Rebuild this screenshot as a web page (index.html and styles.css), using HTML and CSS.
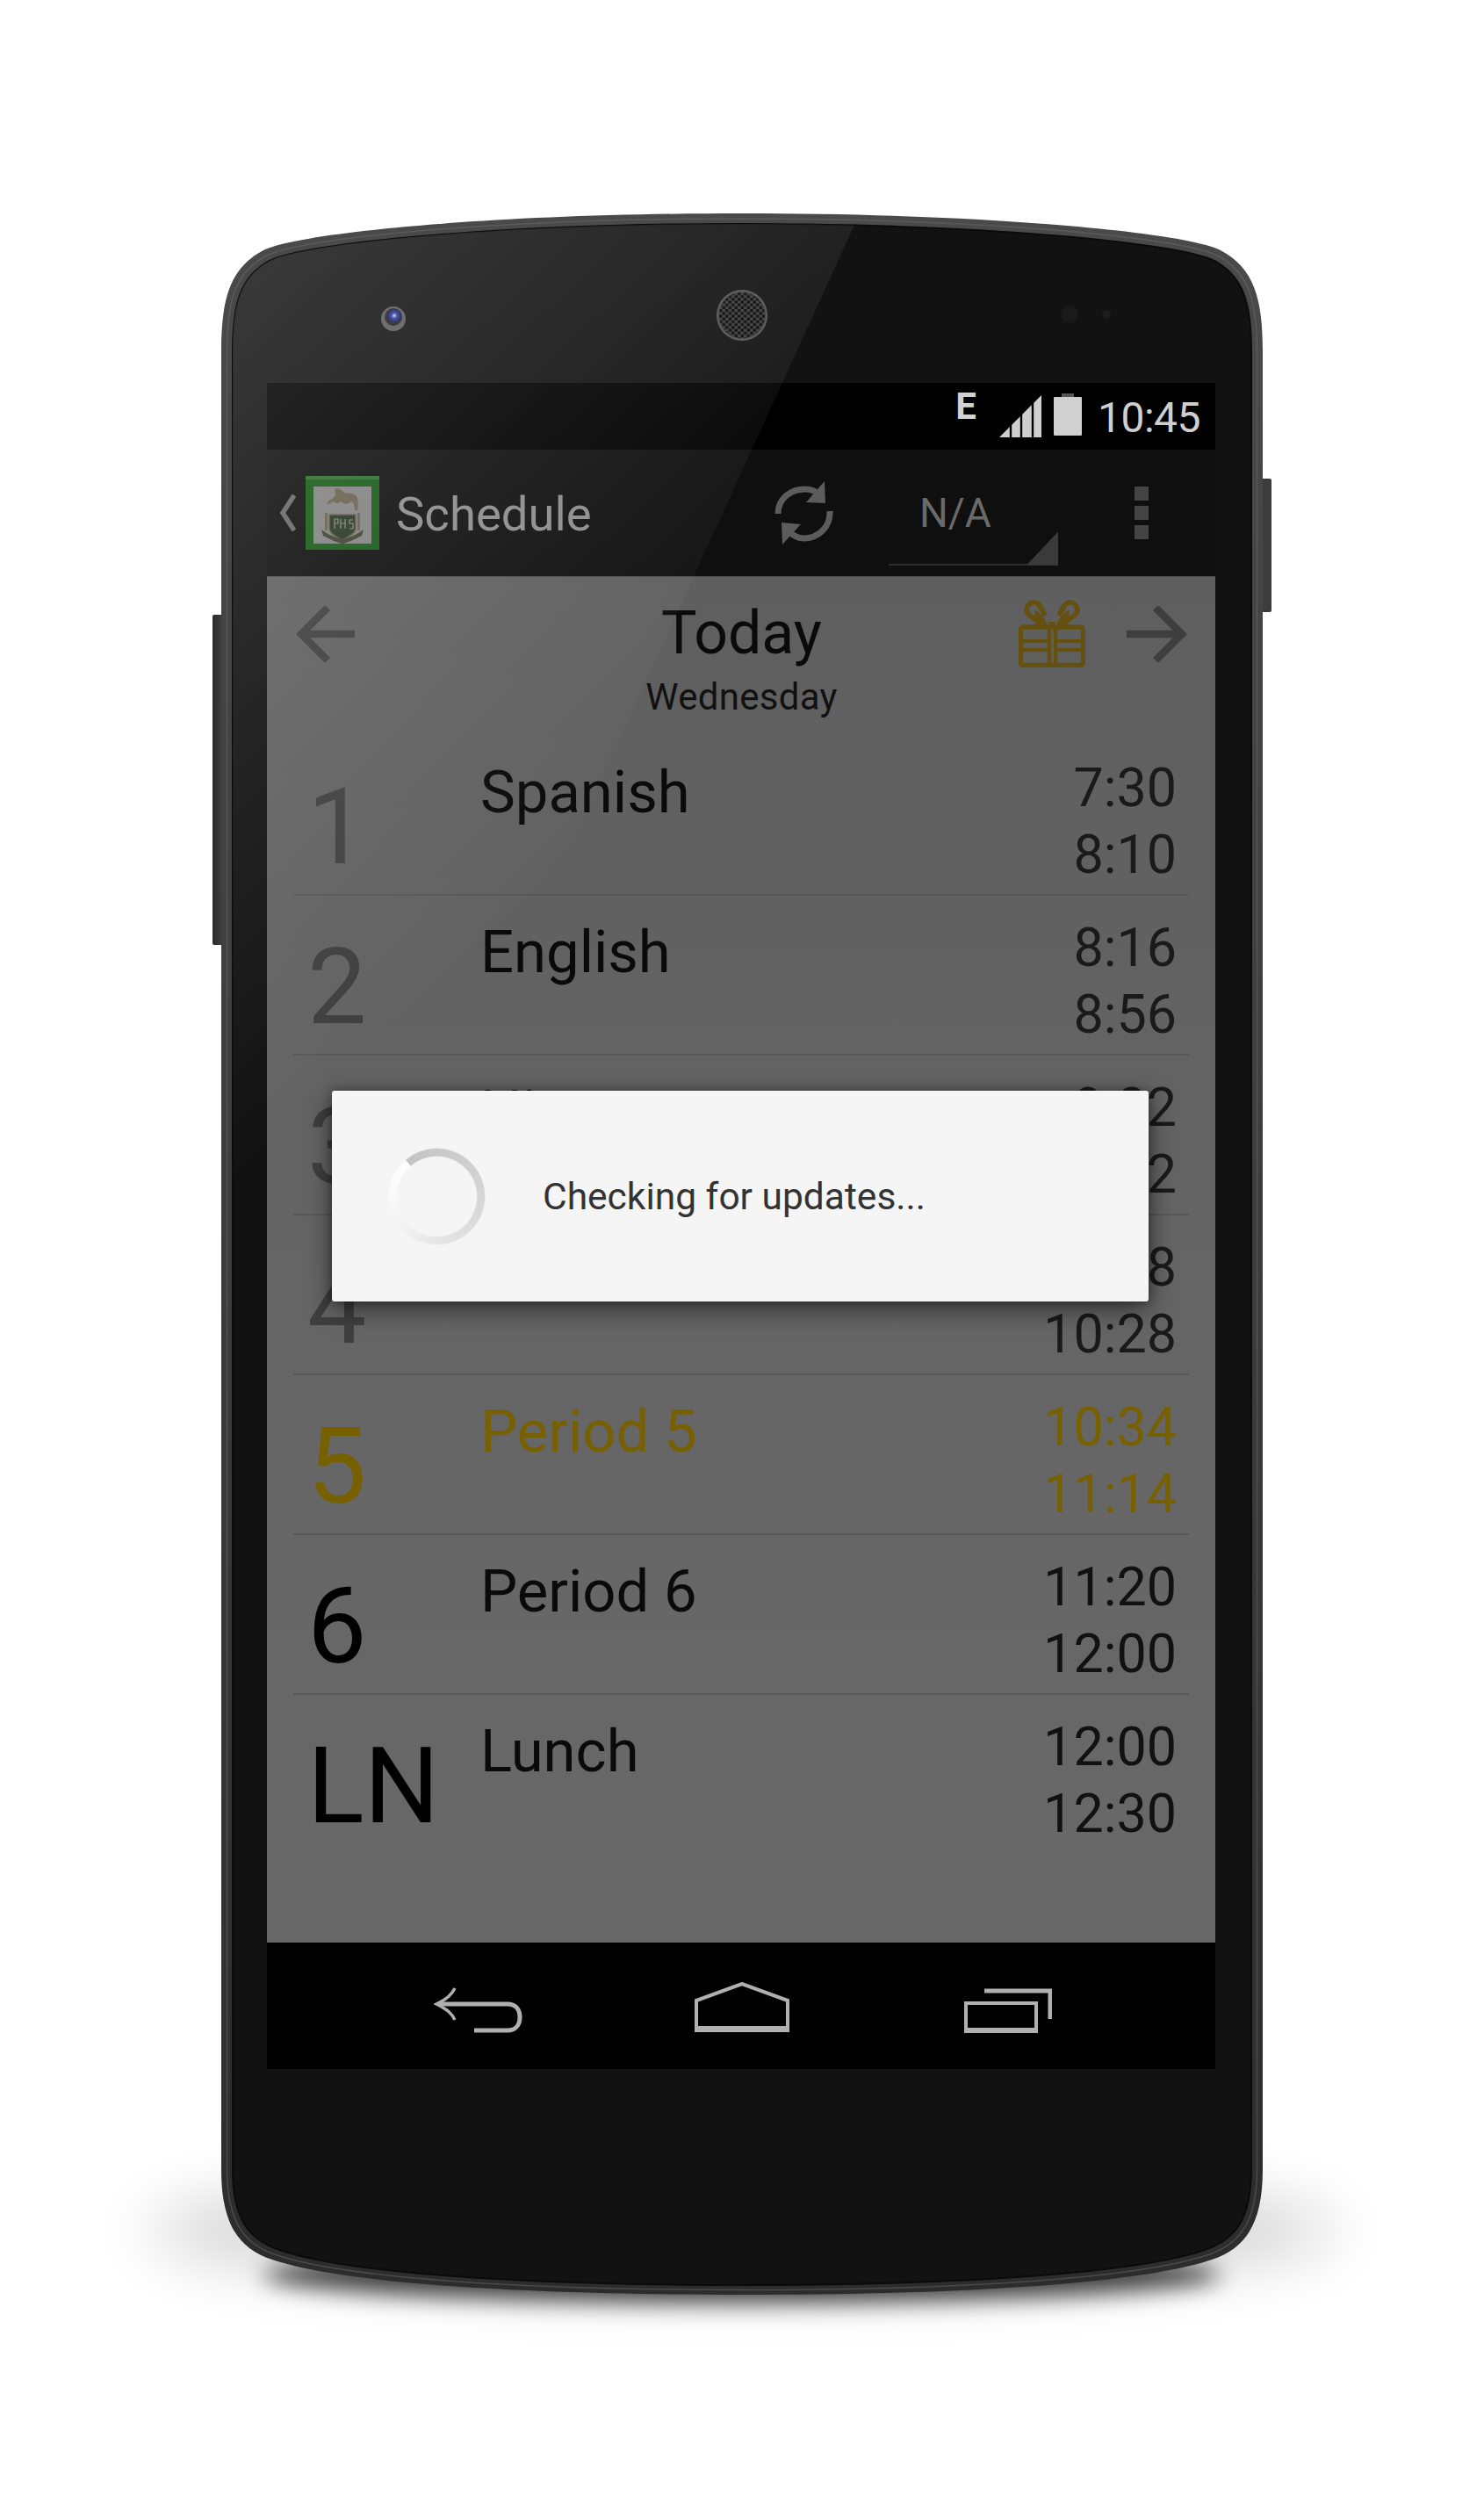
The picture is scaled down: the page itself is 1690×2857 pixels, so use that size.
FILE: index.html
```html
<!DOCTYPE html>
<html lang="en">
<head>
<meta charset="utf-8">
<title>Schedule</title>
<link rel="stylesheet" href="styles.css">
</head>
<body>
<div class="stage">
  <svg class="device" viewBox="0 0 1690 2857" width="1690" height="2857" aria-hidden="true">
    <defs>
      <filter id="blurWide" x="-30%" y="-200%" width="160%" height="500%"><feGaussianBlur stdDeviation="34"/></filter>
      <filter id="blurNear" x="-30%" y="-200%" width="160%" height="500%"><feGaussianBlur stdDeviation="13"/></filter>
      <linearGradient id="rim" x1="0" y1="0" x2="0" y2="1">
        <stop offset="0" stop-color="#4a4a4a"/><stop offset=".5" stop-color="#3c3c3c"/><stop offset="1" stop-color="#2c2c2c"/>
      </linearGradient>
      <linearGradient id="btn" x1="0" y1="0" x2="1" y2="0">
        <stop offset="0" stop-color="#2a2a2a"/><stop offset="1" stop-color="#464646"/>
      </linearGradient>
      <pattern id="holes" width="7" height="6.4" patternUnits="userSpaceOnUse">
        <circle cx="1.8" cy="1.6" r="1.9" fill="#050505"/><circle cx="5.3" cy="4.8" r="1.9" fill="#050505"/>
      </pattern>
      <radialGradient id="lens" cx=".55" cy=".42"><stop offset="0" stop-color="#d4dcf4"/><stop offset=".3" stop-color="#2f3fa8"/><stop offset=".75" stop-color="#161a44"/><stop offset="1" stop-color="#222"/></radialGradient>
    </defs>
    <ellipse cx="845" cy="2540" rx="680" ry="70" fill="#000" opacity=".16" filter="url(#blurWide)"/>
    <ellipse cx="845" cy="2590" rx="545" ry="32" fill="#000" opacity=".72" filter="url(#blurNear)"/>
    <rect class="side" x="242" y="700" width="14" height="376" rx="2" fill="url(#btn)"/>
    <rect class="side" x="1434" y="545" width="14" height="152" rx="2" fill="#3c3c3c"/>
    <path d="M252 400C252 340 262 305 300 285C340 265 560 243 845 243C1130 243 1350 265 1390 285C1428 305 1438 340 1438 400L1438 2470C1438 2530 1420 2560 1380 2573C1300 2600 1100 2613 845 2613C590 2613 390 2600 310 2573C270 2560 252 2530 252 2470Z" fill="url(#rim)"/>
    <path d="M258.500 400C258.500 342 268 310 303.500 291C343 271 562 249 845 249C1128 249 1347 271 1386.500 291C1422 310 1431.500 342 1431.500 400L1431.500 2470C1431.500 2527 1414 2555 1376 2567.500C1297 2594 1100 2607.500 845 2607.500C590 2607.500 393 2594 314 2567.500C276 2555 258.500 2527 258.500 2470Z" fill="none" stroke="#6e6e6e" stroke-width="1.500" opacity=".45"/>
    <path d="M265 400C265 345 274 315 307 297C346 277 565 255 845 255C1125 255 1344 277 1383 297C1416 315 1425 345 1425 400L1425 2470C1425 2525 1408 2550 1372 2562C1295 2588 1100 2602 845 2602C590 2602 395 2588 318 2562C282 2550 265 2525 265 2470Z" fill="#121212" stroke="#0b0b0b" stroke-width="2"/>
    <circle cx="448" cy="363" r="14" fill="#5a5a5a"/>
    <circle cx="448" cy="361" r="10" fill="url(#lens)"/>
    <circle cx="845" cy="359" r="29" fill="#555"/>
    <circle cx="845" cy="359" r="27" fill="#3a3a3a"/>
    <circle cx="845" cy="359" r="26" fill="url(#holes)"/>
    <circle cx="1218" cy="358" r="10" fill="#1a1a1a"/>
    <circle cx="1260" cy="358" r="5" fill="#1c1c1c"/>
  </svg>

  <main class="screen">
    <header class="status">
      <span class="net">E</span>
      <svg class="signal" viewBox="0 0 48 48" width="48" height="48" aria-hidden="true">
        <polygon points="0,48 48,0 48,48" fill="#cfcfcf"/>
        <path d="M13 0V48M25 0V48M38 0V48" stroke="#000" stroke-width="2.400"/>
      </svg>
      <svg class="battery" viewBox="0 0 32 48" width="32" height="48" aria-hidden="true">
        <rect x="9" y="0" width="14" height="5" fill="#555"/>
        <rect x="0" y="4" width="32" height="44" rx="1" fill="#d0d0d0"/>
      </svg>
      <span class="clock">10:45</span>
    </header>

    <nav class="actionbar">
      <svg class="chevron" viewBox="0 0 20 42" width="20" height="42" aria-hidden="true">
        <path d="M18 1 5 21 18 41" fill="none" stroke="#666" stroke-width="5.500"/>
      </svg>
      <svg class="logo" viewBox="0 0 84 84" width="84" height="84" aria-hidden="true">
        <rect width="84" height="84" fill="#175a17"/>
        <rect width="84" height="4" fill="#2f6d2f"/>
        <rect x="9" y="12" width="66" height="65" fill="#828282"/>
        <path d="M24 31C28 26 32 26 34 22L33 15C37 13 40 15 43 18C47 22 52 17 58 23C60 27 60 33 59 39L56 39C56 34 55 30 52 29C48 33 45 32 39 29C37 33 34 30 31 29C28 31 26 33 24 31Z" fill="#67604c"/>
        <rect x="22" y="42" width="3" height="20" fill="#67604c"/>
        <rect x="59" y="42" width="3" height="20" fill="#67604c"/>
        <path d="M27 44H57V60C57 66 48 70 42 73C36 70 27 66 27 60Z" fill="#263726" stroke="#67604c" stroke-width="1.500"/>
        <path d="M18 61C24 66 34 70 42 72C50 70 60 66 66 61L64 68C56 72 48 76 42 77C36 76 28 72 20 68Z" fill="#3f4230"/>
        <path d="M33 49V60M33 49H37V54H33M40 49V60M45 49V60M40 54H45M54 50H50V54H54V60H50" fill="none" stroke="#8a8a70" stroke-width="1.200"/>
      </svg>
      <span class="app-title">Schedule</span>
      <svg class="refresh" viewBox="0 0 67 72" width="67" height="72" aria-hidden="true">
        <path d="M4 37C4 20 18 9 35 9C42 9 48 12 52 16" fill="none" stroke="#5c5c5c" stroke-width="7"/>
        <path d="M57 0 58 25 36 24Z" fill="#5c5c5c"/>
        <path d="M63 34C64 52 50 65 33 65C26 65 20 61 15 56" fill="none" stroke="#5c5c5c" stroke-width="7"/>
        <path d="M9 72 8 47 30 49Z" fill="#5c5c5c"/>
      </svg>
      <div class="spinner-field">
        <span class="spinner-value">N/A</span>
      </div>
      <svg class="overflow" viewBox="0 0 16 60" width="16" height="60" aria-hidden="true">
        <rect width="16" height="16" fill="#444"/><rect y="22" width="16" height="16" fill="#444"/><rect y="44" width="16" height="16" fill="#444"/>
      </svg>
    </nav>

    <section class="content">
      <div class="day-head">
        <svg class="arrow arrow-left" viewBox="0 0 67 64" width="67" height="64" aria-hidden="true">
          <path d="M67 32H6M36 2 6 32 36 62" fill="none" stroke="#3e3e3e" stroke-width="8.500"/>
        </svg>
        <div class="day-title">
          <div class="day-name">Today</div>
          <div class="day-sub">Wednesday</div>
        </div>
        <div class="day-actions">
          <svg class="gift" viewBox="0 0 76 77" width="76" height="77" aria-hidden="true">
            <g fill="none" stroke="#65500f">
              <rect x="2.500" y="31" width="71" height="43.500" rx="3" stroke-width="5.500"/>
              <path d="M2 47H33M43 47H74M2 57H33M43 57H74M35 30V75M42 30V75" stroke-width="4.500"/>
              <path d="M30 27C20 24 10 18 9 12C9 6 14 2 19 3C24 4 26 10 30 18" stroke-width="5.500"/>
              <path d="M46 27C56 24 66 18 67 12C67 6 62 2 57 3C52 4 50 10 46 18" stroke-width="5.500"/>
            </g>
            <path d="M18 12C24 13 31 22 33 30H20ZM58 12C52 13 45 22 43 30H56ZM33 25H43L38 31Z" fill="#65500f"/>
          </svg>
          <svg class="arrow arrow-right" viewBox="0 0 69 64" width="69" height="64" aria-hidden="true">
            <path d="M0 32H63M33 2 63 32 33 62" fill="none" stroke="#3e3e3e" stroke-width="8.500"/>
          </svg>
        </div>
      </div>

      <ul class="periods">
        <li class="period past"><span class="num">1</span><span class="subject">Spanish</span><span class="times">7:30<br>8:10</span></li>
        <li class="period past"><span class="num">2</span><span class="subject">English</span><span class="times">8:16<br>8:56</span></li>
        <li class="period past"><span class="num">3</span><span class="subject">History</span><span class="times">9:02<br>9:42</span></li>
        <li class="period past"><span class="num">4</span><span class="subject">Science</span><span class="times">9:48<br>10:28</span></li>
        <li class="period current"><span class="num">5</span><span class="subject">Period 5</span><span class="times">10:34<br>11:14</span></li>
        <li class="period"><span class="num">6</span><span class="subject">Period 6</span><span class="times">11:20<br>12:00</span></li>
        <li class="period"><span class="num">LN</span><span class="subject">Lunch</span><span class="times">12:00<br>12:30</span></li>
      </ul>
    </section>

    <footer class="navbar">
      <svg class="nav-back" viewBox="0 0 104 56" width="104" height="56" aria-hidden="true">
        <path d="M24 2C20 10 15 14 3 20C15 26 20 30 24 38" fill="none" stroke="#b0b0b0" stroke-width="3.500"/>
        <path d="M6 20H84C93 20 98 26 98 35C98 44 93 50 84 50H46" fill="none" stroke="#b0b0b0" stroke-width="5"/>
      </svg>
      <svg class="nav-home" viewBox="0 0 108 58" width="108" height="58" aria-hidden="true">
        <path d="M2 55V21L54 2 106 21V55Z" fill="none" stroke="#b0b0b0" stroke-width="4"/>
        <path d="M0 53H108" stroke="#b0b0b0" stroke-width="6"/>
      </svg>
      <svg class="nav-recent" viewBox="0 0 100 54" width="100" height="54" aria-hidden="true">
        <path d="M2 19H82V51H2Z" fill="none" stroke="#b0b0b0" stroke-width="4"/>
        <path d="M0 50H84" stroke="#b0b0b0" stroke-width="6"/>
        <path d="M23 5H98V37" fill="none" stroke="#b0b0b0" stroke-width="5"/>
      </svg>
    </footer>

    <div class="dialog" role="dialog">
      <div class="progress"></div>
      <span class="dialog-text">Checking for updates...</span>
    </div>
  </main>

  <svg class="glare" viewBox="0 0 1690 2857" width="1690" height="2857" aria-hidden="true">
    <defs>
      <linearGradient id="sheen" gradientUnits="userSpaceOnUse" x1="280" y1="260" x2="877" y2="901">
        <stop offset="0" stop-color="#fff" stop-opacity=".17"/>
        <stop offset=".55" stop-color="#fff" stop-opacity=".065"/>
        <stop offset=".9" stop-color="#fff" stop-opacity="0"/>
      </linearGradient>
      <clipPath id="glass">
        <path d="M265 400C265 345 274 315 307 297C346 277 565 255 845 255C1125 255 1344 277 1383 297C1416 315 1425 345 1425 400L1425 2470L265 2470Z"/>
      </clipPath>
    </defs>
    <polygon points="252,243 979,243 400,1510 252,1510" fill="url(#sheen)" clip-path="url(#glass)"/>
  </svg>
</div>
</body>
</html>
```
FILE: styles.css
```css
* { box-sizing: border-box; }

html, body {
  margin: 0;
  padding: 0;
  background: #fff;
}

body {
  font-family: Roboto, "Liberation Sans", sans-serif;
}

.stage {
  position: relative;
  width: 1690px;
  height: 2857px;
  padding: 436px 0 0 304px;
  overflow: hidden;
}

.device,
.glare {
  position: absolute;
  left: 0;
  top: 0;
}

.glare {
  z-index: 2;
  pointer-events: none;
}

.screen {
  position: relative;
  width: 1080px;
  display: flex;
  flex-direction: column;
}

/* status bar */
.status {
  height: 76px;
  background: #000;
  display: flex;
  align-items: flex-start;
  padding-right: 17px;
  justify-content: flex-end;
}

.net {
  font-size: 42px;
  font-weight: 700;
  line-height: 42px;
  color: #d2d2d2;
  margin: 6px 26px 0 0;
}

.signal {
  margin: 14px 14px 0 0;
}

.battery {
  margin: 12px 18px 0 0;
}

.clock {
  font-size: 48px;
  line-height: 56px;
  letter-spacing: -0.5px;
  color: #cfcfcf;
  margin-top: 12px;
}

/* action bar */
.actionbar {
  height: 144px;
  background: #0f0f0f;
  display: flex;
  align-items: center;
  padding-left: 13px;
}

.chevron {
  margin-right: 11px;
}

.logo {
  margin-right: 19px;
}

.app-title {
  flex: 1;
  font-size: 54.500px;
  line-height: 64px;
  color: #8c8c8c;
  margin-top: 2px;
}

.refresh {
  margin-right: 63px;
  margin-left: 1px;
}

.spinner-field {
  position: relative;
  width: 193px;
  height: 90px;
  margin-top: 29px;
  margin-right: 87px;
  border-bottom: 2px solid #2c2c2c;
  padding-left: 35px;
}

.spinner-field::after {
  content: "";
  position: absolute;
  right: 0;
  bottom: -2px;
  width: 36px;
  height: 38px;
  background: #3a3a3a;
  clip-path: polygon(100% 0, 100% 100%, 0 100%);
}

.spinner-value {
  display: block;
  font-size: 46px;
  line-height: 54px;
  color: #6a6a6a;
  margin-top: 3px;
}

.overflow {
  margin-right: 76px;
}

/* content */
.content {
  height: 1556px;
  background: linear-gradient(#5f5f5f, #626262 30%, #666 65%, #686868);
  border-top: 1px solid #4c4c4c;
  display: flex;
  flex-direction: column;
}

.day-head {
  height: 181px;
  display: grid;
  grid-template-columns: 1fr auto 1fr;
  align-items: start;
  padding: 0 32px 0 33px;
}

.arrow-left {
  margin-top: 33px;
}

.day-title {
  text-align: center;
  padding-top: 31px;
}

.day-name {
  font-size: 68px;
  line-height: 66px;
  color: #0a0a0a;
}

.day-sub {
  font-size: 42px;
  line-height: 48px;
  letter-spacing: .3px;
  color: #111;
  margin-top: 16px;
}

.day-actions {
  display: flex;
  justify-content: flex-end;
  align-items: flex-start;
  gap: 47px;
}

.gift {
  margin-top: 26px;
}

.day-actions .arrow-right {
  margin-top: 33px;
}

.periods {
  list-style: none;
  margin: 0 30px;
  padding: 0;
}

.period {
  height: 182px;
  display: flex;
  align-items: flex-start;
  border-bottom: 2px solid #585858;
  padding: 0 14px 0 16px;
  color: #000;
}

.period:last-child {
  border-bottom: 0;
}

.num {
  width: 197px;
  flex: none;
  font-size: 120px;
  line-height: 120px;
  padding-top: 44px;
  box-sizing: content-box;
  height: 120px;
}

.subject {
  flex: 1;
  font-size: 67px;
  line-height: 66px;
  padding-top: 31px;
  color: #0a0a0a;
}

.times {
  text-align: right;
  font-size: 61px;
  line-height: 76px;
  padding-top: 21px;
  color: #111;
}

.past .num {
  color: #3f3f3f;
}

.past .times {
  color: #1a1a1a;
}

.current .num,
.current .subject,
.current .times {
  color: #776000;
}

/* system nav */
.navbar {
  height: 144px;
  background: #000;
  display: flex;
  align-items: flex-start;
  padding-left: 190px;
}

.nav-back {
  margin: 50px 193px 0 0;
}

.nav-home {
  margin: 45px 199px 0 0;
}

.nav-recent {
  margin-top: 50px;
}

/* dialog */
.dialog {
  position: absolute;
  z-index: 3;
  left: 74px;
  top: 806px;
  width: 930px;
  height: 240px;
  background: #f5f5f5;
  border-radius: 3px;
  box-shadow: 0 8px 28px rgba(0, 0, 0, .55), 0 0 10px rgba(0, 0, 0, .3);
  display: flex;
  align-items: center;
  padding-left: 64px;
  gap: 65px;
}

.progress {
  width: 111px;
  height: 111px;
  flex: none;
  border-radius: 50%;
  background: conic-gradient(from -40deg, #c4c4c4 0deg, #cfcfcf 90deg, #dcdcdc 170deg, #e8e8e8 230deg, #f3f3f3 270deg, #fcfcfc 320deg, #fdfdfd 359deg, #c4c4c4 360deg);
  -webkit-mask: radial-gradient(circle closest-side, transparent 0 45px, #000 46.500px 54px, transparent 55.500px);
  mask: radial-gradient(circle closest-side, transparent 0 45px, #000 46.500px 54px, transparent 55.500px);
}

.dialog-text {
  font-size: 42.500px;
  line-height: 50px;
  color: #333;
  margin-top: 2px;
}
```
